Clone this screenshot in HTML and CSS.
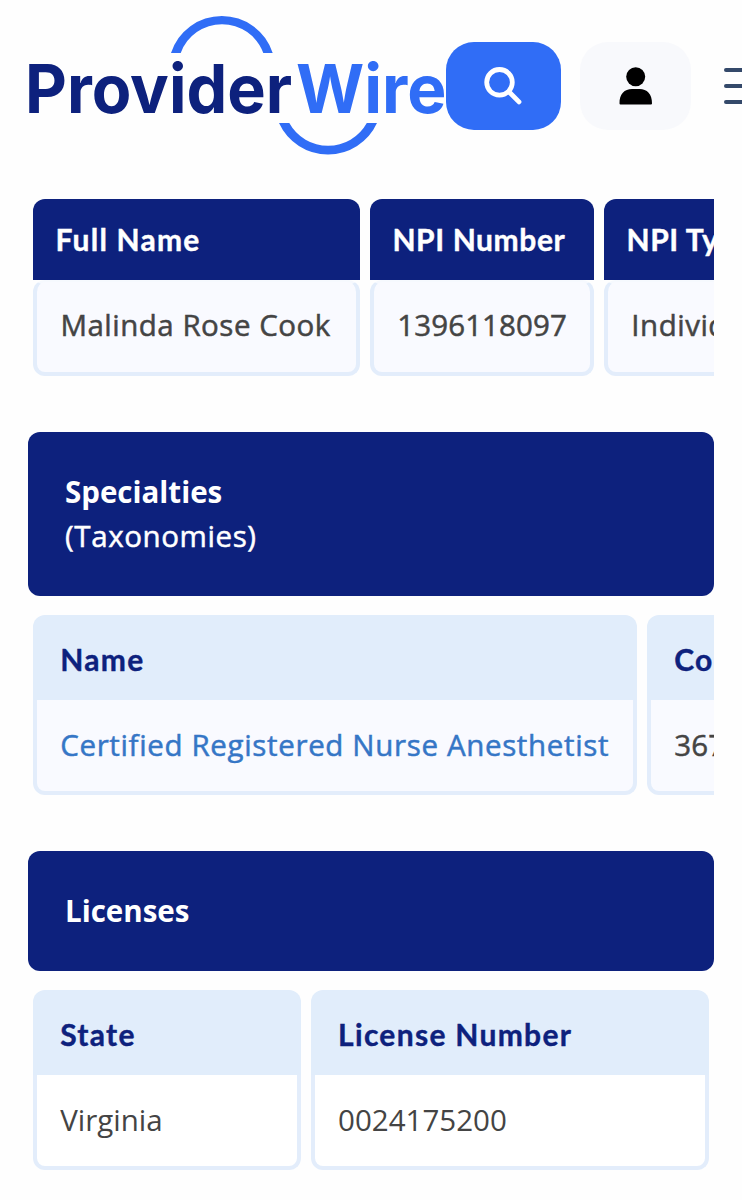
FILE: index.html
```html
<!DOCTYPE html>
<html lang="en">
<head>
    <meta charset="UTF-8">
    <meta name="viewport" content="width=device-width, initial-scale=1.0">
    <title>ProviderWire</title>
    <link rel="stylesheet" href="styles.css">
</head>
<body>

    <header class="header">
        <a class="logo" aria-label="ProviderWire">
            <svg width="418" height="172" viewBox="28 0 418 172">
                <path class="logo-arc" d="M171 53A53.4 53.4 0 0 1 272.7 53H263.3A44 44 0 0 0 180.7 53Z"/>
                <text class="logo-dark" x="25" y="112.800" textLength="267" lengthAdjust="spacingAndGlyphs">Provider</text>
                <text class="logo-light" x="296" y="112.800" textLength="150.500" lengthAdjust="spacingAndGlyphs">Wire</text>
                <path class="logo-arc" d="M279 123A53.9 53.9 0 0 0 377 123H366.8A44.3 44.3 0 0 1 289.3 123Z"/>
            </svg>
        </a>
        <button class="btn btn-search" aria-label="Search">
            <svg width="40" height="40" viewBox="0 0 40 40">
                <circle cx="16.500" cy="16.3" r="12.8"/>
                <path d="M25.9 25.7L36 35.9"/>
            </svg>
        </button>
        <button class="btn btn-user" aria-label="Account">
            <svg width="34" height="38" viewBox="0 0 34 38">
                <circle cx="16.7" cy="9.7" r="9.5"/>
                <path d="M0.5 36.5C0.3 27 5.500 22 13 22H20.500C28 22 33.2 27 33 36.500Q33 37.500 32 37.500H1.500Q0.500 37.500 0.500 36.500Z"/>
            </svg>
        </button>
        <button class="menu" aria-label="Menu">
            <span></span>
            <span></span>
            <span></span>
        </button>
    </header>

    <main class="content">
        <div class="table table-info">
            <div class="col col-name">
                <div class="head">Full Name</div>
                <div class="cell">Malinda Rose Cook</div>
            </div>
            <div class="col col-npi">
                <div class="head">NPI Number</div>
                <div class="cell number">1396118097</div>
            </div>
            <div class="col col-type">
                <div class="head">NPI Type</div>
                <div class="cell">Individual</div>
            </div>
        </div>

        <div class="title title-tall">
            <strong>Specialties</strong>
            <span>(Taxonomies)</span>
        </div>
        <div class="table table-light">
            <div class="col col-specialty">
                <div class="head">Name</div>
                <div class="cell"><a class="link">Certified Registered Nurse Anesthetist</a></div>
            </div>
            <div class="col col-code">
                <div class="head">Code</div>
                <div class="cell number">367500000X</div>
            </div>
        </div>

        <div class="title">
            <strong>Licenses</strong>
        </div>
        <div class="table table-light table-plain">
            <div class="col col-state">
                <div class="head">State</div>
                <div class="cell">Virginia</div>
            </div>
            <div class="col col-license">
                <div class="head">License Number</div>
                <div class="cell">0024175200</div>
            </div>
        </div>
    </main>

</body>
</html>
```

FILE: styles.css
```css
* {
    box-sizing: border-box;
}
body {
    margin: 0;
    overflow: hidden;
    background-color: #fefefe;
    font-family: "Open Sans", sans-serif;
    font-size: 29.5px;
    color: #444444;
}

/* Header */
.header {
    display: flex;
    align-items: center;
    height: 172px;
    padding-left: 28px;
}
.logo {
    flex: none;
    width: 417.5px;
    height: 172px;
}
.logo svg {
    display: block;
    overflow: visible;
}
.logo text {
    font-family: Inter, sans-serif;
    font-size: 67.5px;
    font-weight: 700;
}
.logo-dark {
    fill: #0d217d;
}
.logo-light,
.logo-arc {
    fill: #306df6;
}
.btn {
    flex: none;
    display: flex;
    align-items: center;
    justify-content: center;
    height: 88px;
    padding: 0;
    border: none;
    border-radius: 28px;
}
.btn-search {
    width: 115.5px;
    background-color: #306df6;
}
.btn-search svg {
    fill: none;
    stroke: #ffffff;
    stroke-width: 4.8;
    stroke-linecap: round;
}
.btn-user {
    width: 111px;
    margin-left: 19px;
    background-color: #f8f9fc;
}
.menu {
    flex: none;
    display: flex;
    flex-direction: column;
    gap: 12.3px;
    width: 48px;
    margin-left: 33px;
    padding: 0;
    border: none;
    background: none;
}
.menu span {
    height: 4px;
    border-radius: 2px;
    background-color: #34496a;
}

/* Tables */
.content {
    width: 686px;
    margin: 27px 0 0 28px;
}
.table {
    display: flex;
    gap: 9.6px;
    padding-left: 4.7px;
    overflow: hidden;
    white-space: nowrap;
}
.col {
    flex: none;
}
.head {
    font-family: Lato, sans-serif;
    font-size: 30px;
    font-weight: 700;
    letter-spacing: 1.3px;
    -webkit-text-stroke: 0.4px;
}
.cell {
    border: 4px solid #e3edfb;
    background-color: #f9faff;
    letter-spacing: 0.5px;
    -webkit-text-stroke: 0.5px;
}
.cell.number {
    letter-spacing: 0.1px;
}
.table-info .head {
    height: 81px;
    padding-left: 22.8px;
    border-radius: 12px 12px 0 0;
    background-color: #0d217d;
    line-height: 80px;
    letter-spacing: 1.2px;
    color: #ffffff;
}
.table-info .col-npi .head,
.table-info .col-type .head {
    letter-spacing: 0.6px;
}
.table-info .cell {
    height: 95.5px;
    padding-left: 23.7px;
    border-top-width: 2px;
    border-top-color: #f6f9fe;
    border-radius: 12px;
    line-height: 86px;
}
.table-light .head {
    height: 85px;
    padding-left: 27.5px;
    border-radius: 12px 12px 0 0;
    background-color: #e1edfb;
    line-height: 88px;
    color: #0d217d;
}
.table-light .cell {
    height: 95px;
    padding-left: 23.5px;
    border-top: none;
    border-radius: 0 0 12px 12px;
    line-height: 89px;
}
.table-plain .cell {
    background-color: #ffffff;
    letter-spacing: normal;
    -webkit-text-stroke: 0;
}
.link {
    letter-spacing: 0.65px;
    color: #3576c6;
}
.col-name {
    width: 327.3px;
}
.col-npi {
    width: 224.5px;
}
.col-type {
    width: 200px;
}
.col-specialty {
    width: 604.5px;
}
.col-code {
    width: 240px;
}
.col-state {
    width: 268.3px;
}
.col-license {
    width: 398.8px;
}

/* Section titles */
.title {
    display: flex;
    flex-direction: column;
    justify-content: center;
    height: 120.2px;
    margin: 56px 0 19px;
    padding: 1px 0 0 37px;
    border-radius: 12px;
    background-color: #0d217d;
    line-height: 44px;
    color: #ffffff;
}
.title-tall {
    height: 164.2px;
    padding-top: 0;
}
.title span {
    letter-spacing: 0.6px;
    -webkit-text-stroke: 0.5px;
}
```
